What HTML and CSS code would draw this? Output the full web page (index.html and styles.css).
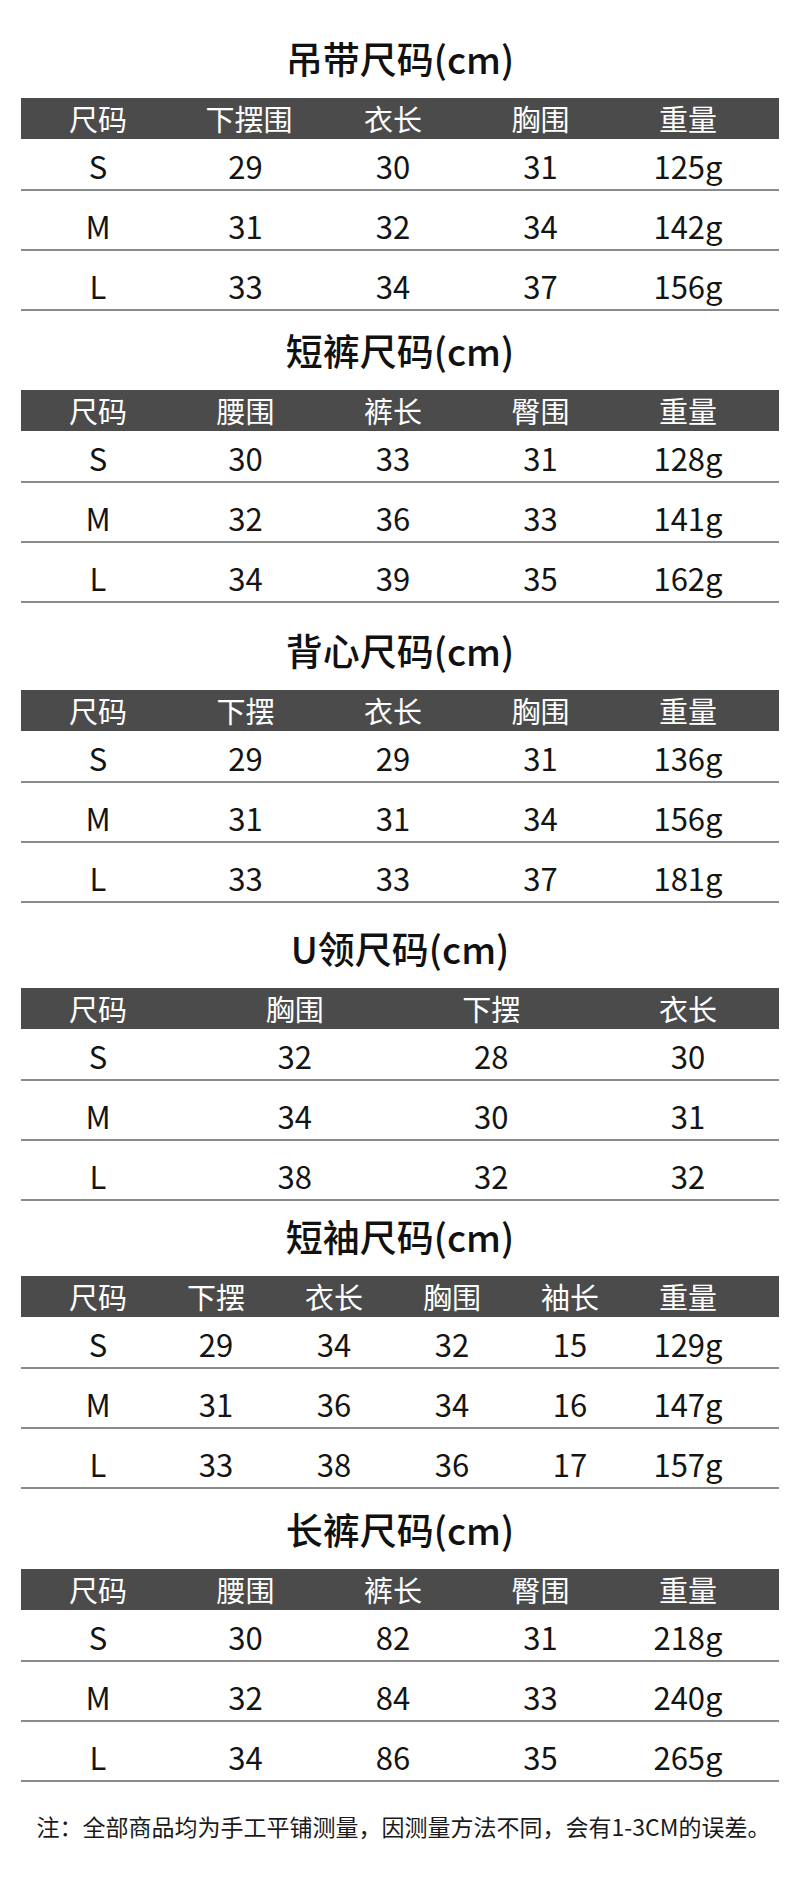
FILE: index.html
```html
<!DOCTYPE html>
<html lang="zh-CN">
<head>
<meta charset="utf-8">
<title>尺码表</title>
<link rel="stylesheet" href="styles.css">
</head>
<body>
<main class="page">

  <section class="size-section s1">
    <h2 class="title">吊带尺码(cm)</h2>
    <div class="table">
      <div class="row head"><span class="cell">尺码</span><span class="cell">下摆围</span><span class="cell">衣长</span><span class="cell">胸围</span><span class="cell">重量</span></div>
      <div class="row body first"><span class="cell">S</span><span class="cell">29</span><span class="cell">30</span><span class="cell">31</span><span class="cell">125g</span></div>
      <div class="row body"><span class="cell">M</span><span class="cell">31</span><span class="cell">32</span><span class="cell">34</span><span class="cell">142g</span></div>
      <div class="row body"><span class="cell">L</span><span class="cell">33</span><span class="cell">34</span><span class="cell">37</span><span class="cell">156g</span></div>
    </div>
  </section>

  <section class="size-section s2">
    <h2 class="title">短裤尺码(cm)</h2>
    <div class="table">
      <div class="row head"><span class="cell">尺码</span><span class="cell">腰围</span><span class="cell">裤长</span><span class="cell">臀围</span><span class="cell">重量</span></div>
      <div class="row body first"><span class="cell">S</span><span class="cell">30</span><span class="cell">33</span><span class="cell">31</span><span class="cell">128g</span></div>
      <div class="row body"><span class="cell">M</span><span class="cell">32</span><span class="cell">36</span><span class="cell">33</span><span class="cell">141g</span></div>
      <div class="row body"><span class="cell">L</span><span class="cell">34</span><span class="cell">39</span><span class="cell">35</span><span class="cell">162g</span></div>
    </div>
  </section>

  <section class="size-section s3">
    <h2 class="title">背心尺码(cm)</h2>
    <div class="table">
      <div class="row head"><span class="cell">尺码</span><span class="cell">下摆</span><span class="cell">衣长</span><span class="cell">胸围</span><span class="cell">重量</span></div>
      <div class="row body first"><span class="cell">S</span><span class="cell">29</span><span class="cell">29</span><span class="cell">31</span><span class="cell">136g</span></div>
      <div class="row body"><span class="cell">M</span><span class="cell">31</span><span class="cell">31</span><span class="cell">34</span><span class="cell">156g</span></div>
      <div class="row body"><span class="cell">L</span><span class="cell">33</span><span class="cell">33</span><span class="cell">37</span><span class="cell">181g</span></div>
    </div>
  </section>

  <section class="size-section s4">
    <h2 class="title">U领尺码(cm)</h2>
    <div class="table">
      <div class="row head"><span class="cell">尺码</span><span class="cell">胸围</span><span class="cell">下摆</span><span class="cell">衣长</span></div>
      <div class="row body first"><span class="cell">S</span><span class="cell">32</span><span class="cell">28</span><span class="cell">30</span></div>
      <div class="row body"><span class="cell">M</span><span class="cell">34</span><span class="cell">30</span><span class="cell">31</span></div>
      <div class="row body"><span class="cell">L</span><span class="cell">38</span><span class="cell">32</span><span class="cell">32</span></div>
    </div>
  </section>

  <section class="size-section s5">
    <h2 class="title">短袖尺码(cm)</h2>
    <div class="table">
      <div class="row head"><span class="cell">尺码</span><span class="cell">下摆</span><span class="cell">衣长</span><span class="cell">胸围</span><span class="cell">袖长</span><span class="cell">重量</span></div>
      <div class="row body first"><span class="cell">S</span><span class="cell">29</span><span class="cell">34</span><span class="cell">32</span><span class="cell">15</span><span class="cell">129g</span></div>
      <div class="row body"><span class="cell">M</span><span class="cell">31</span><span class="cell">36</span><span class="cell">34</span><span class="cell">16</span><span class="cell">147g</span></div>
      <div class="row body"><span class="cell">L</span><span class="cell">33</span><span class="cell">38</span><span class="cell">36</span><span class="cell">17</span><span class="cell">157g</span></div>
    </div>
  </section>

  <section class="size-section s6">
    <h2 class="title">长裤尺码(cm)</h2>
    <div class="table">
      <div class="row head"><span class="cell">尺码</span><span class="cell">腰围</span><span class="cell">裤长</span><span class="cell">臀围</span><span class="cell">重量</span></div>
      <div class="row body first"><span class="cell">S</span><span class="cell">30</span><span class="cell">82</span><span class="cell">31</span><span class="cell">218g</span></div>
      <div class="row body"><span class="cell">M</span><span class="cell">32</span><span class="cell">84</span><span class="cell">33</span><span class="cell">240g</span></div>
      <div class="row body"><span class="cell">L</span><span class="cell">34</span><span class="cell">86</span><span class="cell">35</span><span class="cell">265g</span></div>
    </div>
  </section>

  <p class="note">注：全部商品均为手工平铺测量，因测量方法不同，会有1-3CM的误差。</p>

</main>
</body>
</html>
```
FILE: styles.css
```css
* { box-sizing: border-box; }

html, body {
  margin: 0;
  padding: 0;
  background: #ffffff;
}

body {
  font-family: "Noto Sans CJK SC", "Noto Sans", sans-serif;
  color: #141414;
}

.page {
  width: 800px;
  padding-top: 38px;
}

.size-section.s2 { margin-top: 19px; }
.size-section.s3 { margin-top: 27px; }
.size-section.s4 { margin-top: 25px; }
.size-section.s5 { margin-top: 15px; }
.size-section.s6 { margin-top: 20px; }

.title {
  margin: 0 0 20px 0;
  height: 40px;
  line-height: 40px;
  font-size: 37px;
  font-weight: 500;
  text-align: center;
  color: #111111;
}

.table {
  margin: 0 21px;
}

.row {
  display: flex;
  justify-content: space-between;
  padding: 0 51px 0 37px;
}

.cell {
  width: 80px;
  text-align: center;
  white-space: nowrap;
}

.row.head {
  height: 41px;
  align-items: center;
  background: #4b4b4b;
  color: #ffffff;
  font-size: 29px;
  line-height: 39px;
}

.row.body {
  height: 60px;
  align-items: flex-end;
  padding-bottom: 8px;
  border-bottom: 2px solid #8a8a8a;
  font-size: 31px;
  line-height: 30px;
}

.row.body.first {
  height: 52px;
}

.note {
  margin: 29px 0 0 0;
  padding-left: 7px;
  font-size: 23px;
  line-height: 30px;
  text-align: center;
  color: #1a1a1a;
}
```
